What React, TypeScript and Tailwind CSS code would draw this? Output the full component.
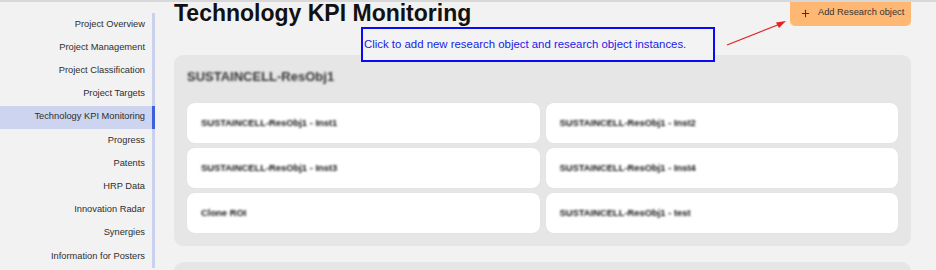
import { Plus } from 'lucide-react'

const NAV = [
  'Project Overview',
  'Project Management',
  'Project Classification',
  'Project Targets',
  'Technology KPI Monitoring',
  'Progress',
  'Patents',
  'HRP Data',
  'Innovation Radar',
  'Synergies',
  'Information for Posters',
]

const INSTANCES = [
  'SUSTAINCELL-ResObj1 - Inst1',
  'SUSTAINCELL-ResObj1 - Inst2',
  'SUSTAINCELL-ResObj1 - Inst3',
  'SUSTAINCELL-ResObj1 - Inst4',
  'Clone ROI',
  'SUSTAINCELL-ResObj1 - test',
]

export default function App() {
  const active = 'Technology KPI Monitoring'

  return (
    <div className="relative flex h-[270px] overflow-hidden border-t-2 border-[#d8d8d8] bg-[#f2f2f2] font-['Liberation_Sans',Arial,sans-serif]">
      {/* Sidebar */}
      <nav className="w-[155px] shrink-0 pt-[11px]">
        <ul className="border-r-[3px] border-[#c9d1ef]">
          {NAV.map(item => (
            <li
              key={item}
              className={`-mr-[3px] flex h-[23.2px] items-center justify-end pr-[7px] text-[9.3px] text-[#2e2e2e] ${
                item === active ? 'border-r-[3px] border-[#3f60dc] bg-[#ccd4f0]' : 'border-r-[3px] border-transparent'
              }`}
            >
              {item}
            </li>
          ))}
        </ul>
      </nav>

      {/* Content */}
      <main className="relative flex-1 pl-[19px] pr-[25px]">
        <div className="flex items-start justify-between">
          <h1 className="text-[23px] font-bold leading-none text-[#111]">Technology KPI Monitoring</h1>
          <button className="relative z-10 -mt-[2px] flex h-[26px] w-[121px] items-center gap-[7px] rounded-b-[5px] bg-[#ffb874] pl-[10px] text-[9.3px] text-[#333]">
            <Plus className="h-[11px] w-[11px]" strokeWidth={2.2} />
            Add Research object
          </button>
        </div>

        {/* Help callout */}
        <div className="absolute left-[206px] top-[25px] z-10 flex h-[35px] w-[354px] items-center border-2 border-[#0a0af5] bg-[#f3f3f3] pl-[1px] text-[11.4px] text-[#1a1ae6]">
          Click to add new research object and research object instances.
        </div>
        <svg className="absolute left-[570px] top-[16px] z-10" width="64" height="32" viewBox="0 0 64 32">
          <line x1="2" y1="27" x2="55" y2="6" stroke="#e42222" strokeWidth="1.3" />
          <polygon points="61,3 51,4.5 54,10" fill="#e42222" />
        </svg>

        {/* Research object */}
        <section className="mt-[29px] rounded-[9px] bg-[#e6e6e6] px-[13px] pt-[12px] pb-[13px]">
          <div className="mb-[16px] flex h-[20px] items-center">
            <span className="text-[13px] font-bold text-[#333] blur-[1.1px]">SUSTAINCELL-ResObj1</span>
          </div>
          <div className="grid grid-cols-2 gap-x-[6px] gap-y-[5px]">
            {INSTANCES.map(name => (
              <div key={name} className="flex h-[40px] items-center rounded-[8px] bg-white px-[14px] shadow-[0_0_2px_rgba(0,0,0,0.04)]">
                <span className="text-[9.4px] font-semibold text-[#111] blur-[0.8px]">{name}</span>
              </div>
            ))}
          </div>
        </section>

        <section className="mt-[16px] h-[40px] rounded-[9px] bg-[#e6e6e6]" />
      </main>
    </div>
  )
}
